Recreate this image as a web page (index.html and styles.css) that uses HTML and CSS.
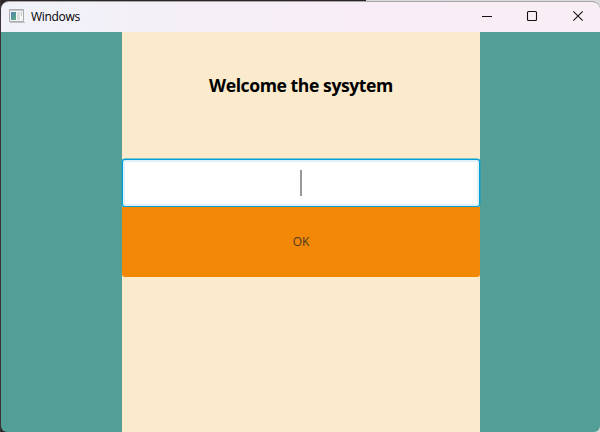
FILE: index.html
```html
<!DOCTYPE html>
<html lang="en">
<head>
<meta charset="utf-8">
<title>Windows</title>
<link rel="stylesheet" href="styles.css">
</head>
<body>
<div class="desktop">
<main class="window">
  <header class="titlebar">
    <svg class="app-icon" width="16" height="14" viewBox="0 0 16 14">
      <defs><linearGradient id="pane" x1="0" y1="0" x2="1" y2="1"><stop offset="0" stop-color="#527fb7"/><stop offset="1" stop-color="#59af7b"/></linearGradient></defs>
      <path fill="#f5f5f5" stroke="#a9abb2" d="M.5.5h14v12H.5z"/>
      <path fill="#c5c7cd" d="M1 1h13v1H1z"/>
      <path fill="url(#pane)" d="M2 3h5v8H2z"/>
      <path fill="#dedfdd" d="M8 3h3v8H8z"/>
      <path fill="#b9c7bd" d="M12 3h1v4h-1z"/>
      <path fill="#bfc0c5" d="M1 13h15v1H1z"/>
    </svg>
    <span class="title">Windows</span>
    <div class="controls">
      <svg width="12" height="12" viewBox="0 0 12 12"><path d="M1 6.500h10"/></svg>
      <svg width="12" height="12" viewBox="0 0 12 12"><rect x="1.500" y="1.500" width="9" height="9" rx="1"/></svg>
      <svg class="close" width="12" height="12" viewBox="0 0 12 12"><path d="M1.300 1.300l9.400 9.400M10.700 1.300l-9.400 9.400"/></svg>
    </div>
  </header>
  <section class="content">
    <form class="panel">
      <h1>Welcome the sysytem</h1>
      <div class="field"><span class="caret"></span></div>
      <button class="ok" type="button">OK</button>
    </form>
  </section>
</main>
</div>
</body>
</html>
```
FILE: styles.css
```css
* { box-sizing: border-box; }
body { margin: 0; }
.desktop {
  width: 600px;
  height: 432px;
  padding: 1px 0 0 1px;
  overflow: hidden;
  background: linear-gradient(90deg, #3a3438 1px, #292526 1px, #292526 366px, #dadada 366px);
}
.window {
  width: 599px;
  height: 431px;
  overflow: hidden;
  border-top: 1px solid #aaa5a8;
  border-radius: 8px 8px 6px 6px;
  background: #539f97;
}
.titlebar {
  display: flex;
  align-items: center;
  height: 30px;
  padding: 0 16px 0 8px;
  background: linear-gradient(90deg, #f1f2f9, #f8edf6 60%, #f9eef5);
}
.app-icon { margin-top: -2px; }
.title {
  margin-left: 6px;
  color: #000;
  font: 12px/16px "Open Sans", "Noto Sans", sans-serif;
  letter-spacing: -0.3px;
}
.controls {
  display: flex;
  gap: 33px;
  margin-left: auto;
}
.controls svg {
  display: block;
  margin-top: -2px;
  fill: none;
  stroke: #111;
  stroke-width: 1.1;
}
.controls .close { margin-left: 1px; }
.content {
  display: flex;
  height: 400px;
  padding-left: 121px;
}
.panel {
  display: flex;
  flex-direction: column;
  width: 358px;
  background: #fbeacb;
}
h1 {
  height: 127px;
  margin: 0;
  padding-top: 40px;
  color: #000;
  font: bold 17.6px/26px "Open Sans", "Noto Sans", sans-serif;
  letter-spacing: -0.43px;
  text-align: center;
}
.field {
  display: flex;
  align-items: center;
  justify-content: center;
  height: 48px;
  border: 1.400px solid #039ed3;
  border-radius: 3px;
  background: #fff;
  box-shadow: inset 0 0 0 2px #dff2fa, 0 0 0 0.400px #039ed3;
}
.caret {
  width: 2px;
  height: 26px;
  background: #999;
}
.ok {
  height: 70px;
  padding: 0;
  border: 0;
  border-radius: 0 0 3px 3px;
  background: #f38807;
  color: #4b3b26;
  font: 12px/16px "Open Sans", "Noto Sans", sans-serif;
}
```
